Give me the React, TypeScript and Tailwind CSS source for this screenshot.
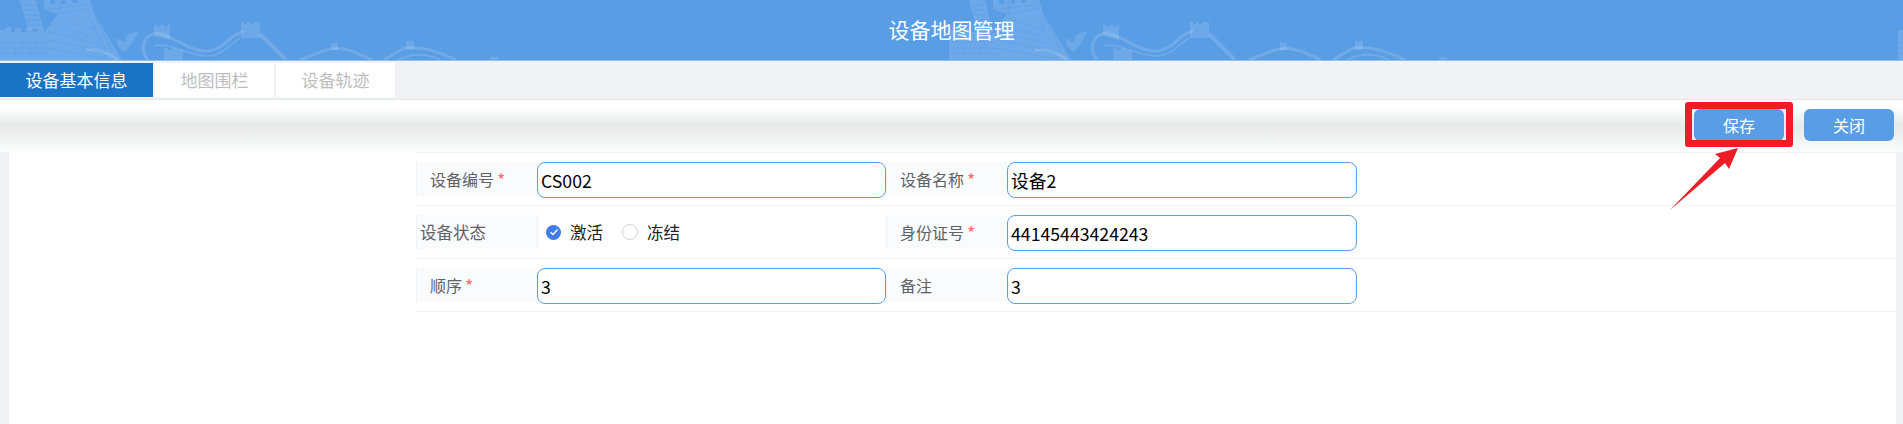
// one repeat of the great wall watermark, repeats every 949px
function WallTile({ x }: { x: number }) {
  return (
    <g transform={`translate(${x} 0)`}>
      <g fill="#fff" fillOpacity="0.12">
        {/* fortress */}
        <path d="M0 30 H5 V27 H11 V32 H15 V28 H21 V32 H26 V28 H32 V31 H38 V28 H44 V33 H46 V60 H0 Z" />
        <path d="M20 0 H36 L43 28 L28 30 Z" />
        <path d="M44 0 H50 V4 H55 V0 H62 V4 H66 V0 H72 V3 H77 V0 H90 L95 16 L102 26 L110 40 L116 50 L122 60 H46 V30 L58 14 L44 10 Z" />
        {/* bird shape */}
        <path d="M139 31 L130 46 L124 52 L118 46 L116 38 L124 42 L128 34 Z" />
        {/* towers */}
        <path d="M154 25 H157 V27 H160 V25 H164 V27 H167 V25 H170 V40 L154 36 Z" />
        <path d="M241 22 H244 V24 H247 V22 H250 V24 H253 V22 H260 V38 H241 Z" />
        <path d="M164 48 H168 V50 H172 V48 H176 V50 H183 V60 H164 Z" />
        <path d="M331 43 H338 V50 H331 Z" />
        <path d="M406 41 H414 V50 H406 Z" />
        <path d="M490 57 H498 V60 H490 Z" />
      </g>
      <g fill="none" stroke="#fff" strokeOpacity="0.14">
        {/* winding wall */}
        <path strokeWidth="3" d="M148 60 C140 50 142 36 156 33 C176 36 188 52 208 51 C224 50 230 34 244 31" />
        <path strokeWidth="1.5" d="M154 46 C170 42 188 56 208 56 C222 56 230 44 240 38" />
        <path strokeWidth="4" d="M260 34 L286 60" />
        <path strokeWidth="3" d="M118 60 C108 52 96 48 86 50" />
        {/* far hills */}
        <path strokeWidth="3" d="M300 60 L326 50 C340 46 352 50 372 60" />
        <path strokeWidth="3" d="M384 60 L404 48 C420 46 436 50 456 60" />
        <path strokeWidth="2" d="M398 60 C412 53 426 53 440 60" />
      </g>
      {/* brick and stair lines */}
      <g fill="none" stroke="#599ee5" strokeOpacity="0.55" strokeWidth="1">
        <path d="M0 42 H46 M0 48 H46 M0 54 H46 M8 42 V48 M22 42 V48 M36 42 V48 M15 48 V54 M30 48 V54" />
        <path d="M22 5 H37 M23 10 H38 M24 15 H39 M25 20 H40 M27 25 H41" />
        <path d="M50 24 L92 36 M48 32 L100 44 M48 40 L108 52 M58 18 L96 30 M46 48 L114 60" />
        <path d="M44 10 L90 4 M60 14 L90 8 M60 0 V14" />
        <path d="M95 16 L112 50 M90 20 L106 50" />
      </g>
    </g>
  );
}

function Label({ text, required }: { text: string; required?: boolean }) {
  return (
    <div className="h-[34px] w-[121px] shrink-0 bg-[#fafbfd] border-l border-[#f0f2f5] flex items-center pl-[13px] text-[16px] text-[#606266]">
      {text}
      {required && <span className="text-[#f56c6c] text-[18px] ml-[3px]">*</span>}
    </div>
  );
}

function TextBox({ value, wide }: { value: string; wide?: boolean }) {
  return (
    <input
      readOnly
      value={value}
      className={`h-[36px] ${wide ? "w-[350px]" : "w-[349px]"} shrink-0 border border-[#5a9fe6] rounded-[8px] bg-white px-[3px] text-[17.7px] text-black outline-none`}
    />
  );
}

function Row({ children }: { children: React.ReactNode }) {
  return <div className="h-[53px] flex items-start pt-[9px] border-b border-[#f0f2f5]">{children}</div>;
}

export default function App() {
  return (
    <div className="font-['Noto_Sans_CJK_SC',sans-serif] h-[424px] w-[1903px] overflow-hidden bg-white">
      <header className="relative h-[61px] bg-[#599ee5] border-b border-[#92c0ee] flex items-center justify-center">
        <svg className="absolute inset-0" width="1903" height="60">
          {[0, 949, 1898].map((x) => (
            <WallTile key={x} x={x} />
          ))}
        </svg>
        <h1 className="relative text-[21px] font-normal text-white">设备地图管理</h1>
      </header>

      <nav className="h-[39px] bg-[#f0f2f5] border-b border-[#e4e6e9] pt-[2px] flex gap-[2px] text-[17px]">
        <div className="h-[34px] w-[153px] bg-[#1a73c5] text-white flex items-center justify-center">设备基本信息</div>
        <div className="h-[34px] w-[119px] bg-white text-[#bdbdbd] flex items-center justify-center">地图围栏</div>
        <div className="h-[34px] w-[119px] bg-white text-[#bdbdbd] flex items-center justify-center">设备轨迹</div>
      </nav>

      <div className="h-[52px] bg-[linear-gradient(to_bottom,#ffffff_0%,#ffffff_14%,#e8e9e9_48%,#ecedec_62%,#fbfcfc_100%)] flex items-center justify-end gap-[20px] pr-[9px] pb-[2px]">
        <div className="relative">
          <button className="block h-[32px] w-[90px] rounded-[6px] bg-[#599ee5] text-white text-[16px]">保存</button>
          <div className="absolute -left-[9px] -right-[9px] -top-[7px] -bottom-[6px] border-[7px] border-[#ee1c25] rounded-[3px]" />
        </div>
        <button className="block h-[32px] w-[90px] rounded-[6px] bg-[#599ee5] text-white text-[16px]">关闭</button>
      </div>

      <main className="relative h-[272px] bg-[#f0f2f5] pl-[9px] pr-[7px]">
        <div className="h-full bg-white rounded-t-[3px] pl-[407px]">
          <div className="border-t border-[#f0f2f5]">
            <Row>
              <Label text="设备编号" required />
              <TextBox value="CS002" />
              <Label text="设备名称" required />
              <TextBox value="设备2" wide />
            </Row>
            <Row>
              <div className="h-[34px] w-[121px] shrink-0 bg-[#fafbfd] border-l border-[#f0f2f5] flex items-center pl-[3px] text-[16.5px] text-[#606266]">
                设备状态
              </div>
              <div className="h-[34px] w-[349px] shrink-0 border-l border-[#f0f2f5] flex items-center pl-[8px] text-[16.5px] text-[#222]">
                <span className="h-[15px] w-[15px] rounded-full bg-[#3f7de8] flex items-center justify-center mr-[9px]">
                  <svg width="10" height="10" viewBox="0 0 10 10" fill="none" stroke="#fff" strokeWidth="1.3">
                    <path d="M1.5 5.2 L4 7.5 L8.5 2.5" />
                  </svg>
                </span>
                激活
                <span className="h-[16px] w-[16px] rounded-full border border-[#d4d4d4] bg-white ml-[19px] mr-[9px]" />
                冻结
              </div>
              <Label text="身份证号" required />
              <TextBox value="44145443424243" wide />
            </Row>
            <Row>
              <Label text="顺序" required />
              <TextBox value="3" />
              <Label text="备注" />
              <TextBox value="3" wide />
            </Row>
          </div>
        </div>
        <svg className="absolute left-[1665px] -top-[12px]" width="80" height="74" viewBox="0 0 80 74">
          <path fill="#ee1c25" d="M5 70 L55 18 L50 14 L73 8 L64 29 L60 23 Z" />
        </svg>
      </main>
    </div>
  );
}
